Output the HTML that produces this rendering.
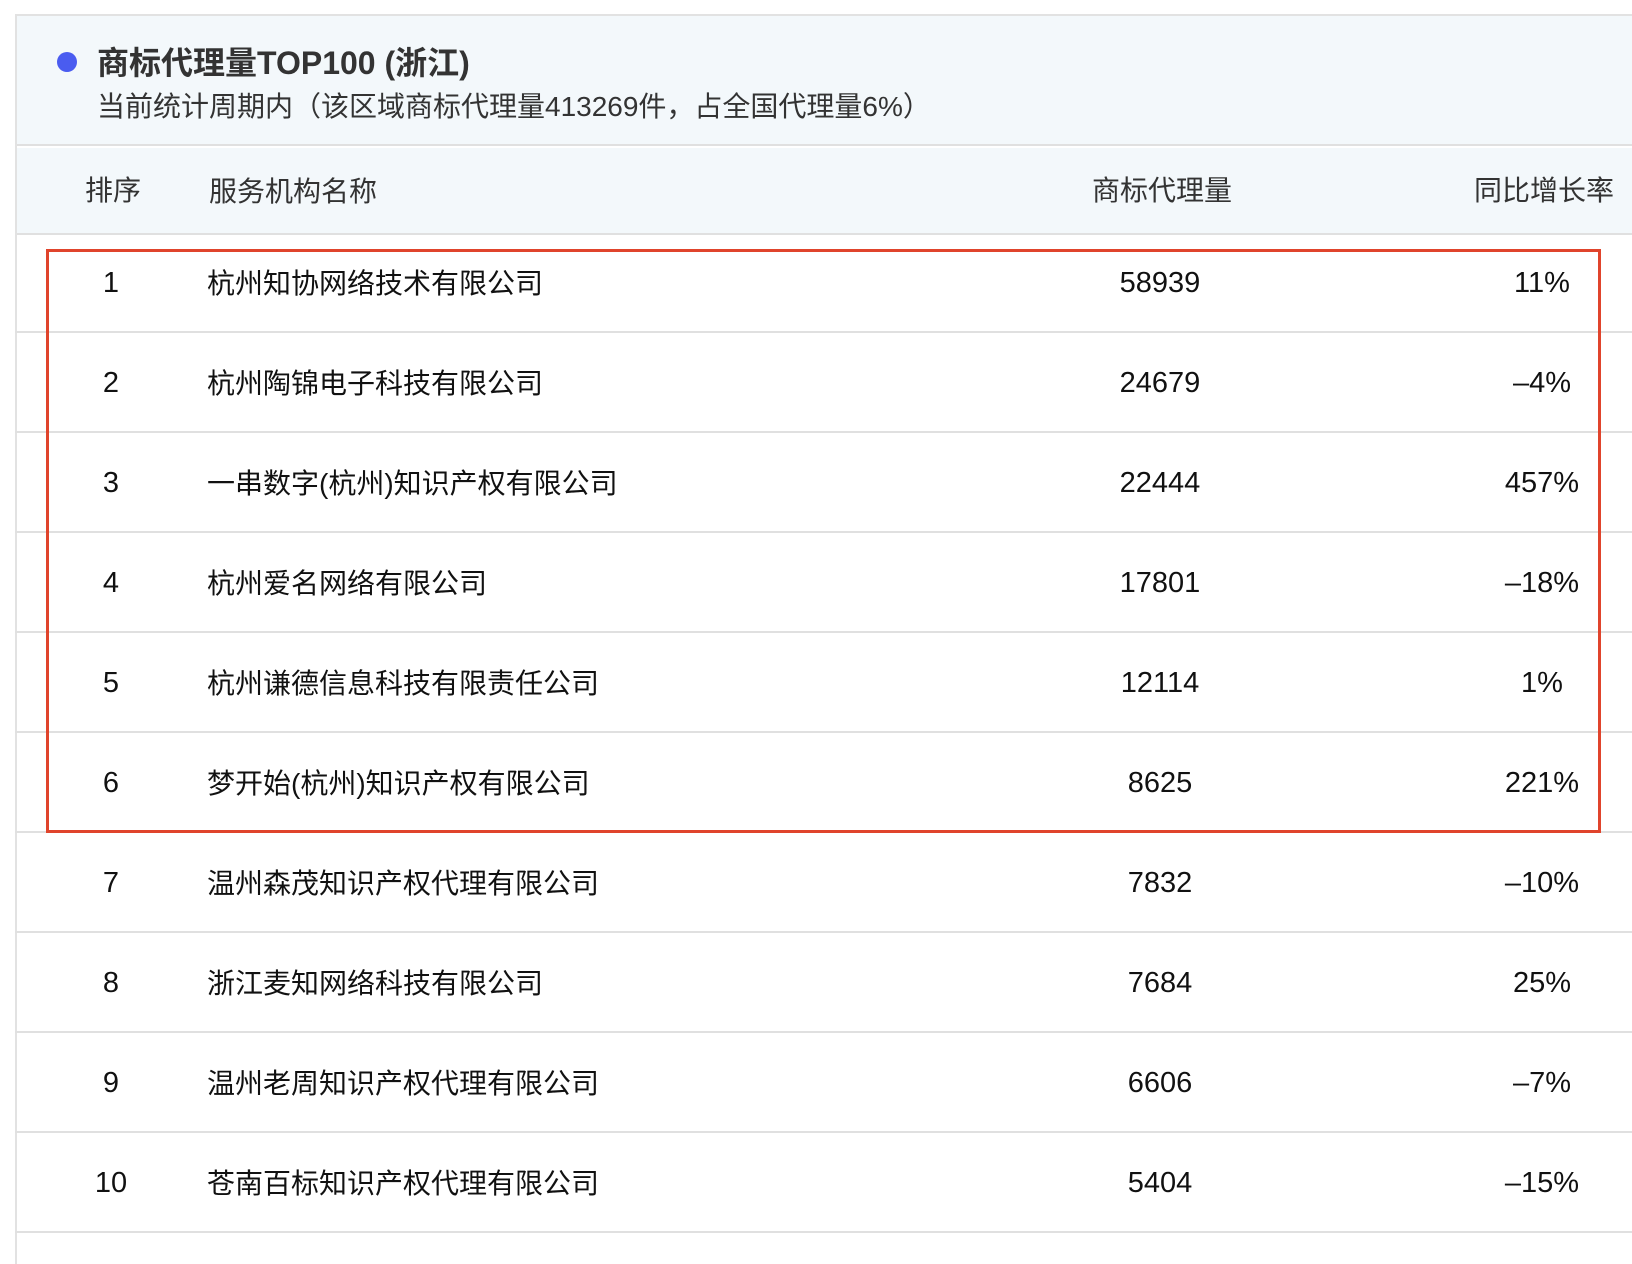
<!DOCTYPE html>
<html><head><meta charset="utf-8"><style>
*{margin:0;padding:0;box-sizing:border-box}
body{width:1632px;height:1248px;background:#fff;position:relative;overflow:hidden;font-family:"Liberation Sans","Noto Sans CJK SC",sans-serif;color:#111}
.panel{position:absolute;left:15px;top:14px;width:1630px;height:1250px;border-left:2px solid #e2e2e2;border-top:2px solid #e2e2e2}
.hd{position:absolute;left:0;top:0;right:0;height:130px;background:#f3f8fb;border-bottom:2px solid #e0e0e0}
.dot{position:absolute;left:40px;top:36px;width:20px;height:20px;border-radius:50%;background:#4a5cf0}
.t1{position:absolute;left:80px;top:22px;font-size:32px;font-weight:bold;color:#333;white-space:nowrap}
.t2{position:absolute;left:80px;top:69px;font-size:28px;color:#333;white-space:nowrap}
.th{position:absolute;left:0;top:132px;right:0;height:87px;background:#f3f8fb;border-bottom:2px solid #e0e0e0;font-size:28px;color:#333}
.th .c span{top:-22px}
.th .nm{transform:translateY(-52%)}
.row{position:absolute;left:0;right:0;height:100px;border-bottom:2px solid #e0e0e0;font-size:28px}
.c{position:absolute;top:50%;transform:translateY(-50%);white-space:nowrap}
.n{left:96px;width:0;text-align:center}
.n span,.q span,.p span{position:absolute;transform:translateX(-50%);top:-16px}
.row .n span,.row .q span,.row .p span{font-size:29px;top:-15px}
.nm{left:192px}
.q{left:1145px}
.p{left:1527px}
.box{position:absolute;left:46px;top:249px;width:1555px;height:584px;border:3px solid #e0442c}
</style></head><body>
<div class="panel">
<div class="hd"><div class="dot"></div><div class="t1">商标代理量TOP100 (浙江)</div><div class="t2">当前统计周期内（该区域商标代理量413269件，占全国代理量6%）</div></div>
<div class="th"><div class="c n"><span>排序</span></div><div class="c nm">服务机构名称</div><div class="c q"><span>商标代理量</span></div><div class="c p"><span>同比增长率</span></div></div>
</div>
<div style="position:absolute;left:15px;top:0;width:1617px;height:1248px">
<div class="row" style="top:233px"><div class="c n"><span>1</span></div><div class="c nm">杭州知协网络技术有限公司</div><div class="c q"><span>58939</span></div><div class="c p"><span>11%</span></div></div>
<div class="row" style="top:333px"><div class="c n"><span>2</span></div><div class="c nm">杭州陶锦电子科技有限公司</div><div class="c q"><span>24679</span></div><div class="c p"><span>–4%</span></div></div>
<div class="row" style="top:433px"><div class="c n"><span>3</span></div><div class="c nm">一串数字(杭州)知识产权有限公司</div><div class="c q"><span>22444</span></div><div class="c p"><span>457%</span></div></div>
<div class="row" style="top:533px"><div class="c n"><span>4</span></div><div class="c nm">杭州爱名网络有限公司</div><div class="c q"><span>17801</span></div><div class="c p"><span>–18%</span></div></div>
<div class="row" style="top:633px"><div class="c n"><span>5</span></div><div class="c nm">杭州谦德信息科技有限责任公司</div><div class="c q"><span>12114</span></div><div class="c p"><span>1%</span></div></div>
<div class="row" style="top:733px"><div class="c n"><span>6</span></div><div class="c nm">梦开始(杭州)知识产权有限公司</div><div class="c q"><span>8625</span></div><div class="c p"><span>221%</span></div></div>
<div class="row" style="top:833px"><div class="c n"><span>7</span></div><div class="c nm">温州森茂知识产权代理有限公司</div><div class="c q"><span>7832</span></div><div class="c p"><span>–10%</span></div></div>
<div class="row" style="top:933px"><div class="c n"><span>8</span></div><div class="c nm">浙江麦知网络科技有限公司</div><div class="c q"><span>7684</span></div><div class="c p"><span>25%</span></div></div>
<div class="row" style="top:1033px"><div class="c n"><span>9</span></div><div class="c nm">温州老周知识产权代理有限公司</div><div class="c q"><span>6606</span></div><div class="c p"><span>–7%</span></div></div>
<div class="row" style="top:1133px"><div class="c n"><span>10</span></div><div class="c nm">苍南百标知识产权代理有限公司</div><div class="c q"><span>5404</span></div><div class="c p"><span>–15%</span></div></div>
</div>
<div class="box"></div>
</body></html>
